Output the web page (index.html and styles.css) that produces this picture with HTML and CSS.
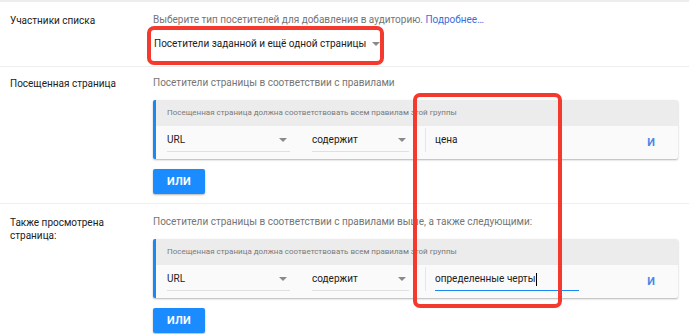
FILE: index.html
```html
<!DOCTYPE html>
<html lang="ru">
<head>
<meta charset="utf-8">
<title>Аудитория</title>
<link rel="stylesheet" href="styles.css">
</head>
<body>
<div class="page">
  <section class="row row-first">
    <div class="label">Участники списка</div>
    <div class="content">
      <p class="desc">Выберите тип посетителей для добавления в аудиторию. <a class="link" href="#">Подробнее…</a></p>
      <div class="dropdown"><span>Посетители заданной и ещё одной страницы</span><span class="caret"></span></div>
    </div>
  </section>

  <section class="row row-second">
    <div class="label">Посещенная страница</div>
    <div class="content">
      <p class="desc">Посетители страницы в соответствии с правилами</p>
      <div class="card">
        <div class="card-head">Посещенная страница должна соответствовать всем правилам этой группы</div>
        <div class="card-body">
          <div class="field field-dim"><span>URL</span><span class="caret"></span></div>
          <div class="field field-op"><span>содержит</span><span class="caret"></span></div>
          <div class="sep"></div>
          <div class="value"><span>цена</span></div>
          <div class="and">И</div>
        </div>
      </div>
      <button class="or-btn">ИЛИ</button>
    </div>
  </section>

  <section class="row row-third">
    <div class="label">Также просмотрена страница:</div>
    <div class="content">
      <p class="desc">Посетители страницы в соответствии с правилами выше, а также следующими:</p>
      <div class="card">
        <div class="card-head">Посещенная страница должна соответствовать всем правилам этой группы</div>
        <div class="card-body">
          <div class="field field-dim"><span>URL</span><span class="caret"></span></div>
          <div class="field field-op"><span>содержит</span><span class="caret"></span></div>
          <div class="sep"></div>
          <div class="value value-active"><span>определенные черты</span><span class="cursor"></span></div>
          <div class="and">И</div>
        </div>
      </div>
      <button class="or-btn">ИЛИ</button>
    </div>
  </section>

  <div class="annot annot-select"></div>
  <div class="annot annot-values"></div>
</div>
</body>
</html>
```

FILE: styles.css
```css
* { box-sizing: border-box; }

html, body {
  margin: 0;
  padding: 0;
  background: #ffffff;
}

body {
  font-family: Roboto, "Noto Sans", "Liberation Sans", sans-serif;
  font-size: 10px;
  color: #212121;
  overflow: hidden;
}

.page {
  position: relative;
  width: 689px;
  height: 334px;
  border-top: 2px solid #ededed;
}

.row {
  display: grid;
  grid-template-columns: 153px 1fr;
  border-bottom: 1px solid #eeeeee;
}

.row-first { padding: 11px 0 15px; }
.row-second { padding: 9px 0 9px; }
.row-third { padding: 11px 0 9px; border-bottom: none; }

.label {
  padding-left: 10px;
  padding-right: 30px;
  line-height: 13px;
  padding-top: 1px;
  color: #212121;
}

.content {
  padding-right: 11px;
}

.desc {
  margin: 0;
  line-height: 14px;
  color: #757575;
}

.link {
  color: #3b6fd8;
  text-decoration: none;
}

.dropdown {
  margin-top: 10px;
  display: inline-flex;
  align-items: center;
  gap: 6px;
  line-height: 14px;
  color: #212121;
  padding-left: 1px;
}

.caret {
  display: inline-block;
  width: 0;
  height: 0;
  border-left: 4px solid transparent;
  border-right: 4px solid transparent;
  border-top: 4px solid #8a8a8a;
}

.card {
  margin-top: 10px;
  border-left: 3px solid #1a88f2;
  border-radius: 2px;
  box-shadow: 0 1px 2px rgba(0, 0, 0, 0.3);
  background: #fafafa;
  overflow: hidden;
}

.card-head {
  height: 26px;
  background: #ececec;
  padding-left: 11px;
  font-size: 8px;
  line-height: 26px;
  color: #7a7a7a;
}

.card-body {
  height: 33px;
  display: flex;
  align-items: flex-start;
  padding-left: 11px;
}

.field {
  display: flex;
  align-items: center;
  justify-content: space-between;
  padding: 7px 3px 4px 0;
  line-height: 14px;
  border-bottom: 1px solid #e0e0e0;
}

.field-dim { width: 123px; margin-right: 22px; }
.field-op { width: 97px; }

.sep {
  width: 1px;
  height: 24px;
  margin: 2px 0 0 16px;
  background: #e6e6e6;
}

.value {
  width: 144px;
  margin-left: 9px;
  padding: 7px 0 4px 0;
  line-height: 14px;
  border-bottom: 1px solid transparent;
  display: flex;
  align-items: center;
}

.value-active {
  border-bottom-color: #1a88f2;
}

.cursor {
  display: inline-block;
  width: 1px;
  height: 13px;
  background: #000;
  margin-left: 1px;
}

.and {
  margin-left: auto;
  margin-right: 23px;
  align-self: center;
  color: #4a86e8;
  font-size: 11px;
  font-weight: 700;
  line-height: 14px;
  padding-top: 1px;
}

.or-btn {
  display: block;
  margin-top: 10px;
  width: 52px;
  height: 25px;
  border: none;
  border-radius: 2px;
  background: #1a8cff;
  color: #ffffff;
  font-family: Roboto, "Noto Sans", "Liberation Sans", sans-serif;
  font-size: 11px;
  font-weight: 700;
  letter-spacing: 0.3px;
  box-shadow: 0 1px 2px rgba(0, 0, 0, 0.3);
  padding: 0;
}

.annot {
  position: absolute;
  border: 4px solid #f43a2f;
  border-radius: 7px;
  pointer-events: none;
}

.annot-select {
  left: 147px;
  top: 24px;
  width: 237px;
  height: 39px;
}

.annot-values {
  left: 413px;
  top: 91px;
  width: 149px;
  height: 215px;
}
```
